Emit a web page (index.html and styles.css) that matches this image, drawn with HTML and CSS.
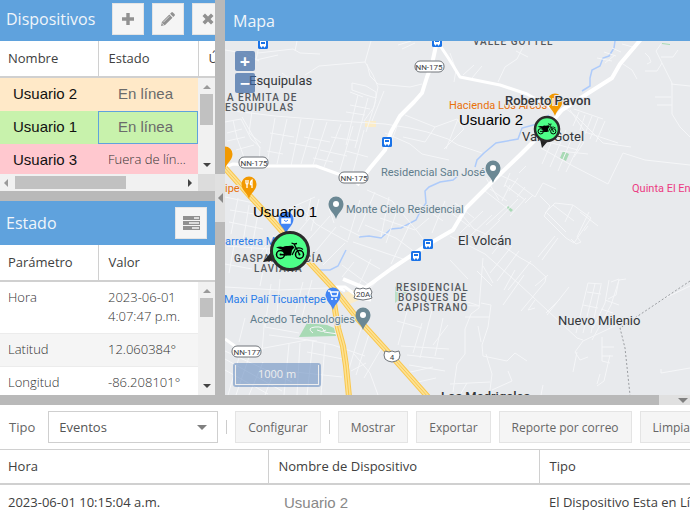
FILE: index.html
```
<!DOCTYPE html>
<html lang="es">
<head>
	<meta charset="UTF-8">
	<title>Mapa de dispositivos</title>
	<link rel="stylesheet" href="styles.css">
</head>
<body>
	<div class="top">
		<div class="side">
			<section class="panel devices">
				<header class="panel-header tight">
					<h2>Dispositivos</h2>
					<div class="tools">
						<button class="tool" aria-label="Agregar">
							<svg width="14" height="14" viewBox="0 0 14 14"><path d="M5.3 1h3.4v4.3H13v3.4H8.7V13H5.3V8.7H1V5.3h4.3z"/></svg>
						</button>
						<button class="tool" aria-label="Editar">
							<svg width="14" height="14" viewBox="0 0 14 14"><path d="M0 14l.9-4.1L8.300 2.500l3.200 3.200L4.100 13.100zM9.100 1.700l1.200-1.200q.8-.8 1.600 0l1.600 1.600q.8.8 0 1.600l-1.200 1.200z"/><path d="M2.300 10.300l6-6" stroke="#f5f5f5" stroke-width=".7"/><path d="M1.200 11.400l1.400 1.400" stroke="#f5f5f5" stroke-width="1"/></svg>
						</button>
						<button class="tool" aria-label="Eliminar">
							<svg width="14" height="14" viewBox="0 0 14 14"><path d="M1.500 4l2.500-2.500L7 4.500l3-3L12.500 4l-3 3 3 3-2.500 2.500-3-3-3 3L1.500 10l3-3z"/></svg>
						</button>
					</div>
				</header>
				<table class="grid head">
					<tr><th class="name">Nombre</th><th class="state">Estado</th><th>Última</th></tr>
				</table>
				<div class="grid-body">
					<table class="grid rows">
						<tr class="idle"><td class="name user">Usuario 2</td><td class="online">En línea</td></tr>
						<tr class="on"><td class="name user">Usuario 1</td><td class="online selected">En línea</td></tr>
						<tr class="off"><td class="name user">Usuario 3</td><td>Fuera de línea</td></tr>
					</table>
					<div class="vscroll"><i class="up"></i><span class="thumb"></span><i class="down"></i></div>
				</div>
				<div class="hscroll"><div class="htrack"><i class="left"></i><span class="thumb"></span><i class="right"></i></div></div>
			</section>
			<div class="split"></div>
			<section class="panel">
				<header class="panel-header">
					<h2>Estado</h2>
					<div class="tools">
						<button class="tool" aria-label="Atributos">
							<svg width="17" height="14" viewBox="0 0 17 14"><path d="M0 0h17v4H0zM0 5h17v4H0zM0 10h17v4H0z"/><path d="M11 1.300h5v1.400h-5zM6 6.300h10v1.400H6zM9 11.300h7v1.400H9z" fill="#f5f5f5"/></svg>
						</button>
					</div>
				</header>
				<table class="grid head">
					<tr><th class="name">Parámetro</th><th>Valor</th></tr>
				</table>
				<div class="grid-body">
					<table class="grid rows params">
						<tr><td class="name">Hora</td><td>2023-06-01<br>4:07:47 p.m.</td></tr>
						<tr class="alt"><td class="name">Latitud</td><td>12.060384°</td></tr>
						<tr><td class="name">Longitud</td><td>-86.208101°</td></tr>
					</table>
					<div class="vscroll short"><i class="up"></i><span class="thumb"></span><i class="down"></i></div>
				</div>
			</section>
		</div>
		<div class="split vertical"><button class="collapse" aria-label="Ocultar panel"><i class="left"></i></button></div>
		<section class="panel map-panel">
			<header class="panel-header map-header"><h2>Mapa</h2></header>
			<div class="map">
				<svg class="map-canvas" viewBox="225 41 465 354" preserveAspectRatio="xMidYMid slice">
					<defs>
						<path id="pin" d="M0 15C-1.500 9-7.500 6.500-7.500 0a7.500 7.500 0 0 1 15 0C7.500 6.500 1.500 9 0 15z"/>
						<g id="bus">
							<rect x="-5" y="-5" width="10" height="10" rx="1.500" fill="#1a73e8"/>
							<path d="M-3-3h6v5.500h-1v1h-1v-1h-2v1h-1v-1h-1z" fill="#fff"/>
							<path d="M-2-2h4v2h-4z" fill="#1a73e8"/>
						</g>
						<g id="moto">
							<g fill="none" stroke="#000">
								<circle cx="-9.500" cy="3.500" r="4" stroke-width="1.500"/>
								<circle cx="9.500" cy="3.500" r="4" stroke-width="1.500"/>
								<path d="M9.500 3.500L4-7M1.500-8l3 1 2.500-.5M-9.500 3.500l6 .5M2 4l3.500-6.500" stroke-width="1.300"/>
								<path d="M6-2.500q4-1.500 7 1" stroke-width="1.200"/>
							</g>
							<path d="M-14-3.500q4-1.500 7-.5 2-1.500 5-1l4.500-.5 2 2-2.500 2.500-1 5.500h-5l-2.500-3.500-2-2.500z"/>
							<circle cx="-9.500" cy="3.500" r="1"/><circle cx="9.500" cy="3.500" r="1"/>
						</g>
					</defs>
					<rect x="225" y="41" width="465" height="354" fill="#e8eaed"/>

					<!-- parks -->
					<g fill="#a8dab5">
						<path d="M307 323l20 2 7 3 2 8-37 1z"/>
						<path d="M395 287l7-5 2 8 3 3-12 10z" opacity=".7"/>
						<path d="M417 282h7v6h-7z" opacity=".6"/>
						<path d="M563 151l6 3-3 7-6-3zM508 206l5 4-2 2-4-4zM662 43l8 1v1l-8-1z"/>
					</g>
					<path d="M313 333q-7-5 2-6t9 5l14 2M317 330q5 3 9 0" class="lane"/>
					<path d="M365 121h11v6h-11zM343 293l12-3 4 10-9 4z" fill="#fbecc8"/>

					<g class="river">
						<path d="M615 41l-1 7-5 8-6 2-3 8-8 4-2 8v8l-8 5M549 115l-12 9-15 4-4 11-22 4-12 10-7 7-2 7M459 175l-6 5-13 2-11 5-4 4 1 12-6 9-4 8-15 8-10 1-10 9-12-2-10 1M346 250l-8 16-8 4-12 0"/>
					</g>

					<!-- small streets -->
					<g class="lane">
						<path d="M225 110l50 6 65 5 45 3M259 46l-3 14 22-5M225 50l19 3 15 8M297 41l-2 10M371 41l-6 21 8 13 5 12-4 20-10 14"/>
						<path d="M258 53l35-4 7 4 20 1M365 62l-46 4-14 9M304 81l-14-2-8-6M367 64l3 12 8 8 32 3 12-3"/>
						<path d="M352 83l14 3 10 6 0 6-10-3-14-5zM358 95l-12 50M368 98l-13 50M376 100l-10 32M384 91l-12 30M350 92l13 5M350 105l20 4M346 112l19 3"/>
						<path d="M225 122l16-3 10 20 9 8-1 17M233 120l4 18 8 22M242 117l18 31M227 133l15-4M227 141l18-4M236 150l18-5M252 111l-3 22 12 10"/>
						<path d="M275 118l-8 46M287 119l-10 45M301 119l-10 47M314 120l-13 44M327 122l-14 43M341 124l-17 43M353 126l-13 44M364 130l-11 42"/>
						<path d="M270 133l24 4M289 143l28 5M304 137l26 5M320 150l27 6M331 137l27 4M267 151l16 3M313 158l20 4M346 151l22 6"/>
						<path d="M385 124l25 4 17 4 21 7 10 6 24 8M405 115l30 12 22-8 7 10-20 20M435 127l-10 15-22-5M397 126l-7 20M385 133l25 11 12 10 27 6"/>
						<path d="M458 119l-12 30M523 47l-6 12-12 8-7 15M450 53l6 17-2 12M463 75l11-10M472 78l10-12M398 45l13-4M402 49l13-6"/>
						<path d="M565 108l12 9 26 26 28 4M570 110l15 22 33 11M574 109l29 10M579 112l-6 14M585 115l-5 15M592 116l-7 18M598 118l-8 21M605 121l-9 21"/>
						<path d="M541 148l32 18 35 18 15-31 22 7 45 5M560 151l28 3M548 142l30 8M542 164l14-32M550 167l16-37M558 171l16-38M566 172l17-35M574 157l10-15"/>
						<path d="M500 175l15 7 20 15 8-14 13 6M505 185l20 15M510 173l-6 14M518 178l-9 13M525 187l-8 10M533 195l-8 8M510 185l-8 16M519 173l7-7M486 178l13 22"/>
						<path d="M620 62l12 8 5 9M661 44l-5 7 11 22 5 10 0 31 8 13 10 10M645 53l4 4 2 5-4 2M645 71h12l5-8M661 57h12l5-7M655 97h16M657 105h15M671 84l19 2"/>
						<path d="M597 58l15 3M604 52l12 4M612 48l9 4M622 44l14 4M615 55l-10 8M528 57l-12-6"/>
						<path d="M450 236l35 18 34 30 28 26 30 28 6 2M462 215l12 14 12 5 33 23 14 8 13 12-1 5-24 29"/>
						<path d="M538 257l17-21M542 260l16-22M519 251l-22 30M531 261l-23 29M512 246l-22 27M503 240l-11 14M524 275l-21 30M515 270l-11 20M535 286l13-11M560 299l-14 14M569 287l-22 28M477 271l15 15M483 266l10 17M535 300l-7 10 7-2"/>
						<path d="M483 211l-23 22M492 215l-23 22M500 220l-23 22M508 205l-22 20M518 199l-20 21M526 198l-16 18M450 212l20 15M455 203l19 15M485 191l22 17M490 189l17 12"/>
						<path d="M540 196l10 10-6 10 22 22 8 5 17-25-18-13-18-2-10 10M547 213l19 19M553 205l21 16M573 205l-8 17M580 212l18 14M589 212l-12 25 4 5-5 2-5-5M584 231l4-5"/>
						<path d="M588 283l-12 50M595 284l-12 49M601 285l-10 48M588 283l14 1M587 292l14 2M583 305l15 3M609 280l-4 23-12 25M626 279l-7 1-8 25-19 35M605 300l14 5M601 309l12 4M611 282l8-3-3 16-8 4M583 341l-8 11 5 8 8-3M577 352l-4 20M583 341l36-17"/>
						<path d="M602 337v24l8 2M602 347h12M602 356h11M610 355l-6 26-7 5M600 374l-3 10M661 369v4l29-5M665 298l25-12"/>
						<path d="M483 258l-4 50-8 6-6 15v25l-8 10-4 28M481 303l10 2-3 22-6 18 1 11 24 5 8-8 12 8M486 354l6 20-2 16M450 260l18 19M452 297l28 9M450 305l29 1M465 317h24M478 326l3 16M450 384l40-2M508 371l4 10-20 9"/>
						<path d="M380 218l35 12 14-12M367 190l25 11 25 30 12 16M389 197l-8 40M375 192l-17 40M360 200l-12 40M399 205l-13 38M410 224l-19 40M365 225l31 13 24 18M353 242l50 17M350 252l30 17M342 265l27 20M419 204l24 17M445 201l-13 32"/>
						<path d="M410 300l-12 45M422 323l-9 30M432 310l-12 48M443 318l-8 38M401 346l48 3M407 355l37 4M397 321l25 7M433 345l15-20M445 371l-36-6M371 259l-13 28M387 270l-21 23M354 262l-12 15"/>
					</g>
					<g class="lane">
						<path d="M225 197l29 6 26 25M238 198l-7 36M249 205l-6 37M258 214l-7 38M230 210l24 4M229 222l34 7M227 246l43 3M235 240l-6 33M225 264l27 5M267 249l-7 37M274 235l-16 22"/>
						<path d="M293 238l21-25M302 247l28-31M311 257l25-30M323 265l22-22M300 206l16 18 32 18M311 198l-5 23M319 199l-8 32M288 209l27-12M329 208l5 15M340 226l20 10"/>
						<path d="M225 287l53 3 50-2M271 284l-6 43 34 6M280 279l-4 45M303 282l-8 31M312 280l-10 37M265 315l-3 37M245 318l-6 24M259 349l48-9 26 5 32 11M269 335l48 6M289 344l-5 51M300 343l-3 52M313 341l-6 54M325 344l-4 51M354 354l16 19 8 22M362 325l-13 44M369 334l-13 41M381 349l-17 29M307 352l36 7M295 372l47 5M351 371l15-8"/>
						<path d="M225 351l67 31M225 359l57 32M225 370l43 24M240 354l-12 41M249 357l-13 38M263 362l-14 33M275 369l-10 26M406 373l27-6M418 382l18-4M460 395l7-12M541 395l2-10"/>
					</g>

					<!-- main roads -->
					<g class="road">
						<path d="M437 41l-5 23-5 13-5 16-8 9-14 14-9 16-6 18-15 18-13 17"/>
						<path d="M437 41l12 18 11 18 40 8 27 9 28 16" class="thin"/>
						<path d="M642 38l-22 26-8 14-22 14-28 18-17 20-24 24-27 26-28 28-13 22-26 15-36 24-26 19-22-9"/>
						<path d="M225 167l8-3 29 2h54l36 13" class="thin"/>
						<path d="M225 339l14 10M345 291l-9-4h9l15 11 11 2" class="thin"/>
					</g>
					<g class="highway">
						<path class="edge" d="M225 168l24 27 24 26 37 42 25 27 22 28 31 34 40 45M334 303l4 25 5 18 3 20 3 31"/>
						<path class="fill" d="M225 168l24 27 24 26 37 42 25 27 22 28 31 34 40 45M334 303l4 25 5 18 3 20 3 31"/>
						<path class="line" d="M225 168l24 27 24 26 37 42 25 27 22 28 31 34 40 45M334 303l4 25 5 18 3 20 3 31"/>
					</g>
					<path d="M690 281l-70 47 5 20 5 47" fill="none" stroke="#9a9da1" stroke-dasharray="2 2"/>

					<use href="#bus" x="263" y="44"/>
					<use href="#bus" x="437" y="42"/>
					<use href="#bus" x="387" y="142"/>
					<use href="#bus" x="428" y="244"/>
					<use href="#bus" x="416" y="256"/>

					<g class="shield">
						<rect x="415" y="61" width="29" height="11" rx="5"/><text x="429" y="70">NN-175</text>
						<rect x="239" y="157" width="29" height="11" rx="5"/><text x="254" y="166">NN-175</text>
						<rect x="339" y="172" width="29" height="11" rx="5"/><text x="354" y="181">NN-175</text>
						<rect x="232" y="346" width="29" height="11" rx="5"/><text x="247" y="355">NN-177</text>
						<path d="M356 288l4 1 3-1 3 1 4-1 2 4-1 3 1 3-3 1-6 1-6-1-3-1 1-3-1-3z"/><text x="363" y="297">20A</text>
						<path d="M385 351l4 1 3-1 3 1 4-1 1 4-1 4-3 2-4 1-4-1-3-2-1-4z"/><text x="392" y="360">4</text>
					</g>

					<g fill="#f29900">
						<use href="#pin" x="225" y="154"/>
						<use href="#pin" x="249" y="184"/>
						<use href="#pin" x="555" y="101"/>
					</g>
					<path d="M246 180v3q0 1 1 1v4M248 180v3q0 1-1 1M252 188v-8q-2 1-1.500 4.500h1.500M553 98v8M557 98v8" fill="none" stroke="#fff" stroke-width="1.300"/>
					<g fill="#6b8894">
						<use href="#pin" x="336" y="204"/>
						<use href="#pin" x="363" y="315"/>
						<use href="#pin" x="493" y="168"/>
					</g>
					<g fill="#fff"><circle cx="336" cy="204" r="3"/><circle cx="363" cy="315" r="3"/><circle cx="493" cy="168" r="3"/></g>
					<g fill="#4285f4">
						<use href="#pin" x="333" y="295"/>
						<use href="#pin" x="286" y="219"/>
					</g>
					<path d="M328 291h2l2 5h5l1-4h-7" fill="none" stroke="#fff" stroke-width="1.300"/>
					<path d="M331 299h2M335 299h2M282 219h8v4h-8z" stroke="#fff" stroke-width="1.500" fill="#fff"/>
					<path d="M284 220q2 3 4 0" fill="none" stroke="#4285f4"/>

					<g class="place">
						<text x="381" y="176" class="grey">Residencial San José</text>
						<text x="346" y="213" class="grey">Monte Cielo Residencial</text>
						<text x="250" y="323" class="grey">Accedo Technologies</text>
						<text x="449" y="109" class="orange">Hacienda Los Arcos</text>
						<text x="225" y="192" class="orange">ipe</text>
						<text x="225" y="245" class="blue">arretera Masaya</text>
						<text x="224" y="303" class="blue">Maxi Palí Ticuantepe</text>
						<text x="632" y="192" class="pink">Quinta El Encanto</text>
					</g>
					<g class="district">
						<text x="227" y="101">A ERMITA DE</text>
						<text x="225" y="111">ESQUIPULAS</text>
						<text x="473" y="45">VALLE GOTTEL</text>
						<text x="234" y="262">GASPAR GARCÍA</text>
						<text x="254" y="272">LAVIANA</text>
						<text x="396" y="291">RESIDENCIAL</text>
						<text x="398" y="301">BOSQUES DE</text>
						<text x="397" y="311">CAPISTRANO</text>
					</g>
					<g class="town">
						<text x="249" y="85">Esquipulas</text>
						<text x="522" y="141">Valle Gotel</text>
						<text x="458" y="245">El Volcán</text>
						<text x="558" y="325">Nuevo Milenio</text>
						<text x="441" y="401" class="strong">Los Madrigales</text>
						<text x="505" y="105" class="strong">Roberto Pavon</text>
					</g>

					<!-- devices -->
					<path d="M263 262l9-11 5 9zM540 139l2 9 6-7z" fill="#222"/>
					<circle cx="290" cy="251" r="18.500" class="marker big"/>
					<circle cx="547" cy="129" r="12" class="marker"/>
					<use href="#moto" transform="translate(290 251)"/>
					<use href="#moto" transform="translate(547 129) scale(.66)"/>
					<g class="device-name">
						<text x="253" y="217">Usuario 1</text>
						<text x="459" y="125">Usuario 2</text>
					</g>
				</svg>
				<div class="zoom">
					<button aria-label="Acercar">+</button>
					<button aria-label="Alejar">−</button>
				</div>
				<div class="scale"><div class="scale-line">1000 m</div></div>
			</div>
		</section>
	</div>
	<div class="split bottom-split"><button class="collapse" aria-label="Ocultar reporte"><i class="down"></i></button></div>
	<section class="report">
		<div class="toolbar">
			<label for="type">Tipo</label>
			<div class="combo">
				<select id="type"><option>Eventos</option></select>
				<i class="down"></i>
			</div>
			<span class="sep"></span>
			<button>Configurar</button>
			<span class="sep"></span>
			<button>Mostrar</button>
			<button>Exportar</button>
			<button>Reporte por correo</button>
			<button>Limpiar</button>
		</div>
		<table class="grid events">
			<thead>
				<tr><th class="time">Hora</th><th class="device">Nombre de Dispositivo</th><th>Tipo</th></tr>
			</thead>
			<tbody>
				<tr><td>2023-06-01 10:15:04 a.m.</td><td class="who">Usuario 2</td><td>El Dispositivo Esta en Línea</td></tr>
			</tbody>
		</table>
	</section>
</body>
</html>
```
FILE: styles.css
```
* {
	box-sizing: border-box;
}

body {
	margin: 0;
	height: 100vh;
	display: flex;
	flex-direction: column;
	overflow: hidden;
	background: #fff;
	color: #404040;
	font: 13px/19px "Open Sans", sans-serif;
}

button {
	cursor: pointer;
	font-family: inherit;
}

.top {
	flex: 1;
	min-height: 0;
	display: flex;
}

.side {
	width: 215px;
	display: grid;
	grid-template-rows: 191fr 10px 194fr;
}

.panel {
	display: flex;
	flex-direction: column;
	min-width: 0;
	min-height: 0;
	overflow: hidden;
}

.panel-header {
	flex: none;
	display: flex;
	justify-content: space-between;
	align-items: center;
	padding: 6px 8px 6px 6px;
	background: #5fa2dd;
}

.panel-header.tight {
	justify-content: flex-start;
	gap: 17px;
	padding-top: 3px;
	padding-right: 0;
}

.panel-header.map-header {
	height: 41px;
	padding: 0 8px;
}

h2 {
	margin: 0;
	color: #f0f5fa;
	font-size: 16px;
	font-weight: 400;
	line-height: 20px;
}

.map-header h2 {
	font-weight: 500;
}

.tools {
	display: flex;
	gap: 8px;
}

.tool {
	flex: none;
	width: 32px;
	height: 32px;
	padding: 0;
	display: flex;
	align-items: center;
	justify-content: center;
	border: 1px solid #e4e4e4;
	background: #f5f5f5;
	fill: #919191;
}

/* grids */
.grid {
	width: 100%;
	border-collapse: collapse;
	table-layout: fixed;
}

.grid th,
.grid td {
	padding: 7px 10px 6px 10px;
	font-weight: 400;
	text-align: left;
	vertical-align: top;
	white-space: nowrap;
	overflow: hidden;
}

.grid .name {
	width: 98px;
	padding-left: 8px;
}

.head .state {
	width: 100px;
}

.head th {
	height: 36px;
	padding-top: 8px;
	border-bottom: 2px solid #d0d0d0;
	border-right: 1px solid #d0d0d0;
	background: #fff;
}

.head th:last-child {
	border-right: none;
}

.grid-body {
	flex: 1;
	min-height: 0;
	display: flex;
	overflow: hidden;
}

.grid-body .grid {
	flex: 1;
	min-width: 0;
	align-self: flex-start;
}

.grid-body .rows td {
	height: 33px;
	padding-top: 6px;
	padding-bottom: 7px;
	text-overflow: ellipsis;
	color: #333;
	font-weight: 300;
}

.grid-body .rows .user {
	padding-left: 13px;
	color: #111;
}

.grid-body .rows .user,
.grid-body .rows .online {
	font-family: "Liberation Sans", Arial, sans-serif;
	font-size: 15px;
	font-weight: 400;
}

.grid-body .rows .online {
	padding-left: 20px;
	color: #6b6b6b;
}

.idle {
	background: #ffe9c8;
}

.on {
	background: #c8f2ac;
}

.off {
	background: #ffc8cf;
}

.rows .selected {
	outline: 1px solid #5fa2dd;
	outline-offset: -1px;
}

.params td {
	border-bottom: 1px solid #ececec;
}

.alt {
	background: #f5f5f5;
}

/* arrows */
.up, .down, .left, .right {
	width: 0;
	height: 0;
	border: 4px solid transparent;
}

.up {
	border-top: none;
	border-bottom-color: #9a9a9a;
}

.down {
	border-bottom: none;
	border-top-color: #444;
}

.left {
	border-left: none;
	border-right-color: #9a9a9a;
}

.right {
	border-right: none;
	border-left-color: #444;
}

/* scrollbars */
.vscroll {
	flex: none;
	width: 17px;
	padding: 7px 2px;
	display: flex;
	flex-direction: column;
	align-items: center;
	gap: 5px;
	background: #f1f1f1;
}

.vscroll .thumb {
	width: 13px;
	height: 31px;
	background: #c1c1c1;
}

.vscroll.short .thumb {
	height: 19px;
}

.vscroll .down {
	margin-top: auto;
}

.hscroll {
	flex: none;
	display: flex;
	height: 17px;
	padding-right: 17px;
	background: #dcdcdc;
}

.htrack {
	flex: 1;
	padding: 2px 6px 2px 4px;
	display: flex;
	align-items: center;
	gap: 7px;
	background: #f1f1f1;
}

.htrack .thumb {
	width: 111px;
	height: 13px;
	background: #c1c1c1;
}

.htrack .right {
	margin-left: auto;
}

/* splitters */
.split {
	flex: none;
	height: 10px;
	background: #b9b9b9;
}

.split.vertical {
	width: 10px;
	height: auto;
	display: flex;
	align-items: center;
}

.collapse {
	padding: 0;
	display: flex;
	align-items: center;
	justify-content: center;
	border: none;
	background: #e0e0e0;
}

.vertical .collapse {
	width: 10px;
	height: 48px;
}

.collapse .left {
	border-width: 5px;
	border-left: none;
	border-right-color: #8a8a8a;
}

.bottom-split {
	display: flex;
	justify-content: flex-end;
}

.bottom-split .collapse {
	width: 31px;
	height: 10px;
	justify-content: flex-end;
	padding-right: 2px;
}

.collapse .down,
.combo .down {
	border-width: 5px;
	border-bottom: none;
	border-top-color: #808080;
}

/* map */
.map-panel {
	flex: 1;
}

.map {
	position: relative;
	flex: 1;
	min-height: 0;
	background: #e8eaed;
}

.map-canvas {
	display: block;
	width: 100%;
	height: 100%;
	font-family: Roboto, sans-serif;
}

.lane {
	fill: none;
	stroke: #f5f6f8;
	stroke-width: 1;
}

.river {
	fill: none;
	stroke: #aecbfa;
	stroke-width: 1.5;
}

.road {
	fill: none;
	stroke: #fff;
	stroke-width: 4;
	stroke-linejoin: round;
}

.road .thin {
	stroke-width: 3;
}

.highway {
	fill: none;
	stroke-linejoin: round;
}

.highway .edge {
	stroke: #f9c74f;
	stroke-width: 6;
}

.highway .fill {
	stroke: #fde293;
	stroke-width: 4;
}

.highway .line {
	stroke: #f9c74f;
	stroke-width: 1;
}

.shield rect,
.shield path {
	fill: #fff;
	stroke: #70757a;
}

.shield text {
	fill: #3c4043;
	font-size: 8px;
	text-anchor: middle;
}

.town,
.district,
.place {
	stroke: #e8eaed;
	stroke-width: 2px;
	stroke-linejoin: round;
	paint-order: stroke;
}

.town {
	fill: #333639;
	font-size: 13px;
}

.town .strong {
	font-weight: 500;
}

.district {
	fill: #55595e;
	font-size: 10px;
	font-weight: 500;
	letter-spacing: 1px;
}

.place {
	font-size: 11px;
}

.grey {
	fill: #5f7d8c;
}

.orange {
	fill: #e8710a;
}

.blue {
	fill: #2b7de9;
}

.pink {
	fill: #ec3b83;
}

.marker {
	fill: #4dff88;
	stroke: #2b2b2b;
	stroke-width: 2.5;
}

.marker.big {
	stroke-width: 3;
}

.device-name {
	fill: #000;
	font-family: "Liberation Sans", Arial, sans-serif;
	font-size: 15px;
}

.zoom {
	position: absolute;
	top: 10px;
	left: 10px;
	display: flex;
	flex-direction: column;
	gap: 2px;
}

.zoom button {
	width: 20px;
	height: 20px;
	padding: 0;
	border: none;
	border-radius: 2px;
	background: rgba(60, 104, 164, .7);
	color: #fff;
	font-size: 18px;
	font-weight: 700;
	line-height: 18px;
}

.scale {
	position: absolute;
	left: 8px;
	bottom: 8px;
	padding: 2px;
	border-radius: 3px;
	background: rgba(95, 135, 190, .55);
}

.scale-line {
	width: 84px;
	height: 20px;
	border: 1px solid #eee;
	border-top: none;
	color: #eee;
	font-size: 11px;
	line-height: 18px;
	text-align: center;
}

/* report */
.report {
	flex: none;
	overflow: hidden;
}

.toolbar {
	display: flex;
	align-items: center;
	gap: 8px;
	padding: 6px 9px;
	border-bottom: 1px solid #d0d0d0;
	color: #666;
}

.toolbar label {
	margin-right: 5px;
}

.toolbar button {
	flex: none;
	height: 32px;
	padding: 0 12px;
	border: 1px solid #e4e4e4;
	background: #f5f5f5;
	color: #666;
	font-size: 12px;
}

.sep {
	flex: none;
	width: 1px;
	height: 14px;
	background: #ccc;
}

.combo {
	position: relative;
	flex: none;
	width: 170px;
}

.combo select {
	width: 100%;
	height: 32px;
	padding: 0 10px;
	appearance: none;
	border: 1px solid #cfcfcf;
	border-radius: 0;
	background: #fff;
	color: #555;
	font: inherit;
}

.combo .down {
	position: absolute;
	right: 11px;
	top: 14px;
	pointer-events: none;
}

.events th {
	height: 34px;
	border-bottom: 2px solid #d0d0d0;
	border-right: 1px solid #d0d0d0;
}

.events th:last-child {
	border-right: none;
}

.events td {
	height: 33px;
	padding-top: 8px;
	padding-bottom: 5px;
}

.events th:first-child,
.events td:first-child {
	padding-left: 8px;
}

.events .time {
	width: 268px;
}

.events .device {
	width: 271px;
}

.events .who {
	padding-left: 16px;
	color: #888;
	font-family: "Liberation Sans", Arial, sans-serif;
	font-size: 15px;
}
```
